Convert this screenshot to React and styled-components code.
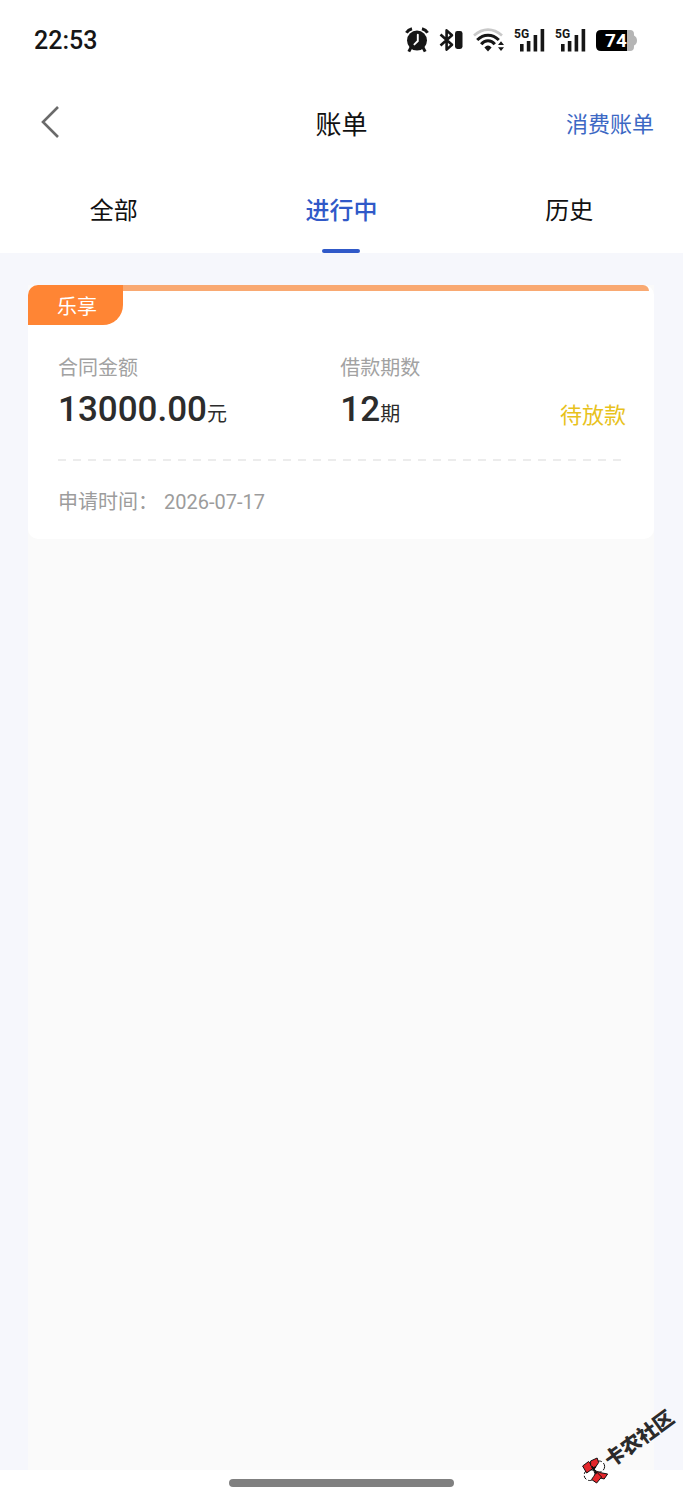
import React, { useState } from 'react';
import styled, { createGlobalStyle } from 'styled-components';

const tabs = ['全部', '进行中', '历史']

const bills = [
  {
    id: 1,
    tag: '乐享',
    amount: '13000.00',
    periods: '12',
    status: '待放款',
    date: '2026-07-17',
  },
]

function AlarmIcon() {
  return (
    <svg width="24" height="26" viewBox="0 0 24 26" fill="none" stroke="#161616">
      <circle cx="12" cy="13.600" r="10" fill="#161616" stroke="none" />
      <path d="M1.400 5.800Q3.200 2.800 7 1.800M22.600 5.800Q20.800 2.800 17 1.800" strokeWidth="3" />
      <path d="M6 20.500L3.800 24.600M18 20.500L20.200 24.600" strokeWidth="3" />
      <path d="M12.800 7.800V14L9.400 17.400" stroke="#fff" strokeWidth="1.900" strokeLinecap="round" />
    </svg>
  )
}

function BluetoothIcon() {
  return (
    <svg width="24" height="24" viewBox="0 0 24 24" fill="none">
      <path d="M1.500 6.500L13 16.800L7.600 21.600V2.400L13 7.200L1.500 17.500" stroke="#161616" strokeWidth="2.600" strokeLinejoin="round" />
      <rect x="16" y="3" width="7.500" height="18" rx="2.400" fill="#161616" />
    </svg>
  )
}

function WifiIcon() {
  return (
    <svg width="31" height="24" viewBox="0 0 31 24" fill="none">
      <path d="M1 7.500Q7.500 1.600 15 1.600T29 7.500" stroke="#c9c9c9" strokeWidth="2.600" />
      <path d="M4.200 12Q9 7.200 15 7.200T25.800 12" stroke="#161616" strokeWidth="3" />
      <path d="M8.200 16.200Q11 12.800 15 12.800T21.800 16.200" stroke="#161616" strokeWidth="3" />
      <path d="M11.400 19.600Q15 15.600 18.600 19.600L15 23.400Z" fill="#161616" />
      <path d="M25 17L28 13.200L31 17ZM25 19.200L28 23L31 19.200Z" fill="#161616" />
    </svg>
  )
}

function SignalIcon() {
  return (
    <svg width="31" height="25" viewBox="0 0 31 25" fill="#161616">
      <text x="0" y="10" fontFamily="Roboto, sans-serif" fontSize="12" fontWeight="700">5G</text>
      <rect x="6" y="16" width="3.600" height="7.500" />
      <rect x="12.800" y="13" width="3.600" height="10.500" />
      <rect x="19.600" y="7" width="3.600" height="16.500" />
      <rect x="26.600" y="1" width="3.600" height="22.500" />
    </svg>
  )
}

function BatteryIcon() {
  return (
    <svg width="41" height="23" viewBox="0 0 41 23">
      <path d="M31 1H34Q38 1 38 5V6.500Q41 8 41 11.500T38 16.500V18Q38 22 34 22H31Z" fill="#b5b5b5" />
      <path d="M5 1H31V22H5Q0 22 0 17V6Q0 1 5 1Z" fill="#000" />
      <text x="9" y="18" fontFamily="Roboto, sans-serif" fontSize="19" fontWeight="700" fill="#fff">74</text>
    </svg>
  )
}

function BackIcon() {
  return (
    <svg width="20" height="34" viewBox="0 0 20 34" fill="none">
      <path d="M18 2L3 17L18 32" stroke="#6a6a6a" strokeWidth="2.600" />
    </svg>
  )
}

function LogoMark() {
  return (
    <Mark width="28" height="28" viewBox="0 0 28 28" stroke="#111" strokeWidth="1">
      <circle cx="17.500" cy="10" r="5.500" fill="#fff" strokeDasharray="4 2" />
      <circle cx="8" cy="18.500" r="5.500" fill="#fff" strokeDasharray="4 2" />
      <path d="M1 9.500L7 5L12 11.500L5 16.500Z" fill="#e3262b" />
      <path d="M9 4.500L15.500 1.500L17 6L13 12L9 9Z" fill="#e3262b" />
      <path d="M13 14L18 16L26 17.500L22.500 22.500L17 21Z" fill="#e3262b" />
      <path d="M12 20L15 15.500L20 20.500L15 26.500L10 23Z" fill="#e3262b" />
      <path d="M10 10L15 17M14 10L11 14" strokeWidth="1.500" />
    </Mark>
  )
}

function BillCard({ bill }) {
  return (
    <Card>
      <CardTop>
        <Tag>{bill.tag}</Tag>
        <Stripe />
      </CardTop>
      <CardBody>
        <Figures>
          <div>
            <Label>合同金额</Label>
            <Value>{bill.amount}<Unit>元</Unit></Value>
          </div>
          <div>
            <Label>借款期数</Label>
            <Value>{bill.periods}<Unit>期</Unit></Value>
          </div>
          <Status>{bill.status}</Status>
        </Figures>
        <Divider />
        <ApplyTime>
          <span>申请时间：</span>
          <time>{bill.date}</time>
        </ApplyTime>
      </CardBody>
    </Card>
  )
}

export default function App() {
  const [active, setActive] = useState('进行中')

  return (
    <Page>
      <GlobalStyle />
      <StatusBar>
        <Clock>22:53</Clock>
        <StatusIcons>
          <AlarmIcon />
          <BluetoothIcon />
          <WifiIcon />
          <SignalIcon />
          <SignalIcon />
          <BatteryIcon />
        </StatusIcons>
      </StatusBar>

      <Header>
        <BackButton aria-label="返回"><BackIcon /></BackButton>
        <Title>账单</Title>
        <HeaderLink href="#">消费账单</HeaderLink>
      </Header>

      <Tabs>
        {tabs.map((tab) => (
          <Tab key={tab} $active={tab === active} onClick={() => setActive(tab)}>{tab}</Tab>
        ))}
      </Tabs>

      <Content>
        <List>
          {bills.map((bill) => (
            <BillCard key={bill.id} bill={bill} />
          ))}
        </List>
      </Content>

      <GestureBar><Handle /></GestureBar>

      <Watermark>
        <LogoMark />
        <WatermarkText>卡农社区</WatermarkText>
      </Watermark>
    </Page>
  )
}

const GlobalStyle = createGlobalStyle`
  * {
    box-sizing: border-box;
  }

  body {
    margin: 0;
    background: #fff;
    font-family: Roboto, "Noto Sans CJK SC", sans-serif;
  }

  button {
    border: 0;
    padding: 0;
    background: none;
    font-family: inherit;
    cursor: pointer;
  }

  svg {
    display: block;
    flex: none;
  }
`

const Page = styled.div`
  position: relative;
  display: flex;
  flex-direction: column;
  min-height: 100vh;
  overflow: hidden;
`

const StatusBar = styled.div`
  display: flex;
  align-items: center;
  justify-content: space-between;
  height: 80px;
  padding: 0 46px 0 34px;
`

const Clock = styled.span`
  font-size: 25px;
  font-weight: 500;
  color: #161616;
`

const StatusIcons = styled.div`
  display: flex;
  align-items: center;
  gap: 10px;
`

const Header = styled.header`
  display: grid;
  grid-template-columns: 1fr auto 1fr;
  align-items: center;
  height: 84px;
  padding: 0 29px;
`

const BackButton = styled.button`
  justify-self: start;
  padding: 0 11px;
`

const Title = styled.h1`
  margin: 0;
  font-size: 26px;
  font-weight: 400;
  color: #111;
`

const HeaderLink = styled.a`
  justify-self: end;
  font-size: 22px;
  color: #3c68c4;
  text-decoration: none;
`

const Tabs = styled.nav`
  display: grid;
  grid-template-columns: repeat(3, 1fr);
  height: 89px;
`

const Tab = styled.button`
  position: relative;
  font-size: 24px;
  font-weight: ${props => props.$active ? 500 : 400};
  color: ${props => props.$active ? '#3059c8' : '#111'};

  &::after {
    content: '';
    display: ${props => props.$active ? 'block' : 'none'};
    position: absolute;
    left: 50%;
    bottom: 0;
    width: 38px;
    height: 4px;
    border-radius: 2px;
    background: #3059c8;
    transform: translateX(-50%);
  }
`

const Content = styled.main`
  flex: 1;
  display: flex;
  padding: 32px 29px 0 28px;
  background: #f6f7fc;
`

const List = styled.div`
  flex: 1;
  background: #fafafa;
`

const Card = styled.article`
  border-radius: 10px;
  background: #fff;
`

const CardTop = styled.div`
  display: flex;
  align-items: flex-start;
  padding-right: 5px;
`

const Tag = styled.span`
  width: 95px;
  height: 40px;
  padding-left: 29px;
  border-radius: 10px 0 20px 0;
  background: #ff8534;
  color: #fff;
  font-size: 20px;
  line-height: 44px;
`

const Stripe = styled.div`
  flex: 1;
  height: 6px;
  border-radius: 0 6px 0 0;
  background: #f9a972;
`

const CardBody = styled.div`
  padding: 29px 28px 22px 30px;
`

const Figures = styled.div`
  display: grid;
  grid-template-columns: 9fr 7fr auto;
`

const Label = styled.div`
  margin-bottom: 8px;
  font-size: 20px;
  line-height: 28px;
  color: #a2a2a2;
`

const Value = styled.div`
  font-size: 35px;
  font-weight: 500;
  line-height: 40px;
  color: #2c2c2c;
`

const Unit = styled.span`
  font-size: 20px;
  font-weight: 400;
  line-height: 20px;
`

const Status = styled.div`
  align-self: end;
  font-size: 22px;
  line-height: 28px;
  color: #e8c21c;
`

const Divider = styled.div`
  height: 2px;
  margin: 29px 0 26px;
  background: repeating-linear-gradient(to right, #ececec 0 8px, transparent 8px 15px);
`

const ApplyTime = styled.div`
  display: flex;
  gap: 6px;
  font-size: 20px;
  line-height: 30px;
  color: #9c9c9c;
`

const GestureBar = styled.div`
  display: flex;
  justify-content: center;
  height: 30px;
  padding-top: 9px;
  background: #fff;
`

const Handle = styled.div`
  width: 33%;
  height: 8px;
  border-radius: 4px;
  background: #808080;
`

const Watermark = styled.div`
  position: absolute;
  right: 1px;
  bottom: 39px;
  display: flex;
  align-items: center;
  transform: rotate(-36deg);
`

const Mark = styled.svg`
  transform: rotate(36deg);
`

const WatermarkText = styled.span`
  font-size: 20px;
  font-weight: 900;
  line-height: 28px;
  color: #2b2b2b;
`
